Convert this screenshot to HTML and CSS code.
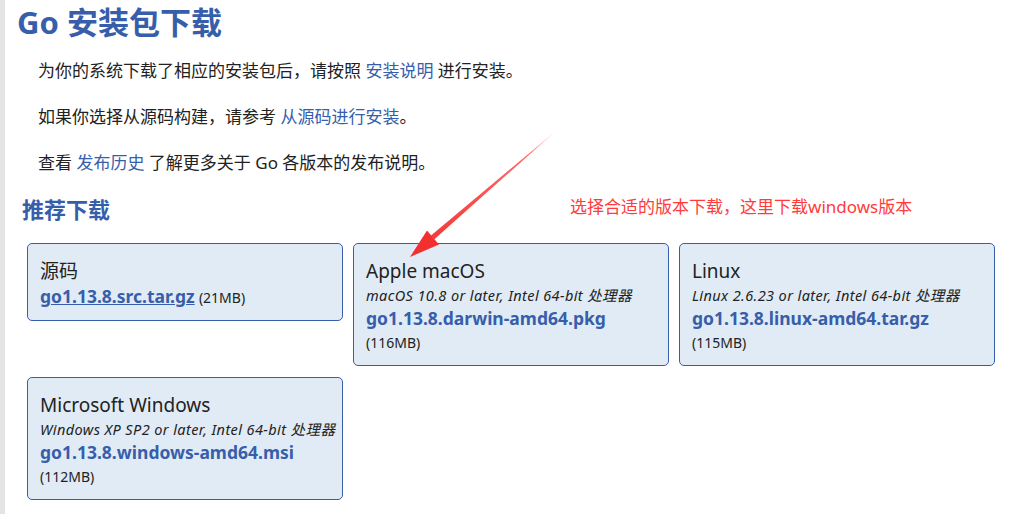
FILE: index.html
```html
<!DOCTYPE html>
<html lang="zh-CN">
<head>
  <meta charset="UTF-8" />
  <title>Go 安装包下载</title>
  <link rel="stylesheet" href="styles.css">
</head>
<body>
  <div class="page">
    <h1 class="title">Go 安装包下载</h1>

    <p class="intro">为你的系统下载了相应的安装包后，请按照 <a href="#">安装说明</a> 进行安装。</p>
    <p class="intro">如果你选择从源码构建，请参考 <a href="#">从源码进行安装</a>。</p>
    <p class="intro">查看 <a href="#">发布历史</a> 了解更多关于 Go 各版本的发布说明。</p>

    <div class="featured-head">
      <h2 class="subtitle">推荐下载</h2>
      <span class="note">选择合适的版本下载，这里下载windows版本</span>
    </div>

    <div class="downloads">
      <div class="card">
        <div class="platform">源码</div>
        <div><a class="file underline" href="#">go1.13.8.src.tar.gz</a> <span class="size">(21MB)</span></div>
      </div>
      <div class="card">
        <div class="platform">Apple macOS</div>
        <div class="reqs">macOS 10.8 or later, Intel 64-bit 处理器</div>
        <a class="file" href="#">go1.13.8.darwin-amd64.pkg</a>
        <div class="size">(116MB)</div>
      </div>
      <div class="card">
        <div class="platform">Linux</div>
        <div class="reqs">Linux 2.6.23 or later, Intel 64-bit 处理器</div>
        <a class="file" href="#">go1.13.8.linux-amd64.tar.gz</a>
        <div class="size">(115MB)</div>
      </div>
      <div class="card">
        <div class="platform">Microsoft Windows</div>
        <div class="reqs">Windows XP SP2 or later, Intel 64-bit 处理器</div>
        <a class="file" href="#">go1.13.8.windows-amd64.msi</a>
        <div class="size">(112MB)</div>
      </div>
    </div>

    <!-- annotation arrow drawn over the page -->
    <svg class="arrow" width="1027" height="514" viewBox="0 0 1027 514">
      <defs>
        <linearGradient id="fade" x1="557" y1="130" x2="410" y2="257" gradientUnits="userSpaceOnUse">
          <stop offset="0" stop-color="#ff3333" stop-opacity="0.1"/>
          <stop offset="0.2" stop-color="#ff3333" stop-opacity="0.75"/>
          <stop offset="1" stop-color="#f23030"/>
        </linearGradient>
      </defs>
      <polygon fill="url(#fade)" points="557,130 434.4,239.2 431,235.5"/>
      <polygon fill="#f23030" points="410,257 439,244.5 427,230.5"/>
    </svg>
  </div>
</body>
</html>
```

FILE: styles.css
```css
* { margin: 0; padding: 0; box-sizing: border-box; }
body {
  background: #fff;
  font-family: "Noto Sans", "Noto Sans CJK SC", sans-serif;
  color: #222;
}
a { color: #375eab; text-decoration: none; }

.page {
  position: relative;
  min-height: 100vh;
  border-left: 5px solid #e4e4e4;
  padding: 2px 0 0 12px;
}

.title {
  font-size: 31px; font-weight: bold; color: #375eab;
  line-height: 40px;
}

.intro {
  font-size: 17px; line-height: 24px;
  margin: 17px 0 0 21px;
}
.intro + .intro { margin-top: 22px; }

.featured-head {
  display: flex; align-items: center;
  margin-top: 19px; padding-left: 5px;
}
.subtitle {
  font-size: 22px; font-weight: bold; color: #375eab;
  line-height: 30px;
}
.note {
  color: #ff3b3b; font-size: 17px;
  margin-left: 460px; margin-top: -8px;
}

.downloads {
  display: flex; flex-wrap: wrap; align-items: flex-start;
  gap: 11px 10px;
  width: 980px;
  margin: 19px 0 0 10px;
}

.card {
  width: 316px;
  background: #e0ebf5;
  border: 1px solid #375eab;
  border-radius: 5px;
  padding: 14px 12px 9px;
}

.platform { font-size: 19px; line-height: 26px; }
.reqs {
  font-size: 14.5px; font-style: italic; line-height: 22px;
  letter-spacing: 0.4px; white-space: nowrap;
}
.file { font-size: 17.5px; font-weight: bold; line-height: 24px; }
.underline { text-decoration: underline; }
.size { font-size: 14px; line-height: 26px; }

.arrow {
  position: absolute; top: 0; left: -5px;
  pointer-events: none;
}
```
